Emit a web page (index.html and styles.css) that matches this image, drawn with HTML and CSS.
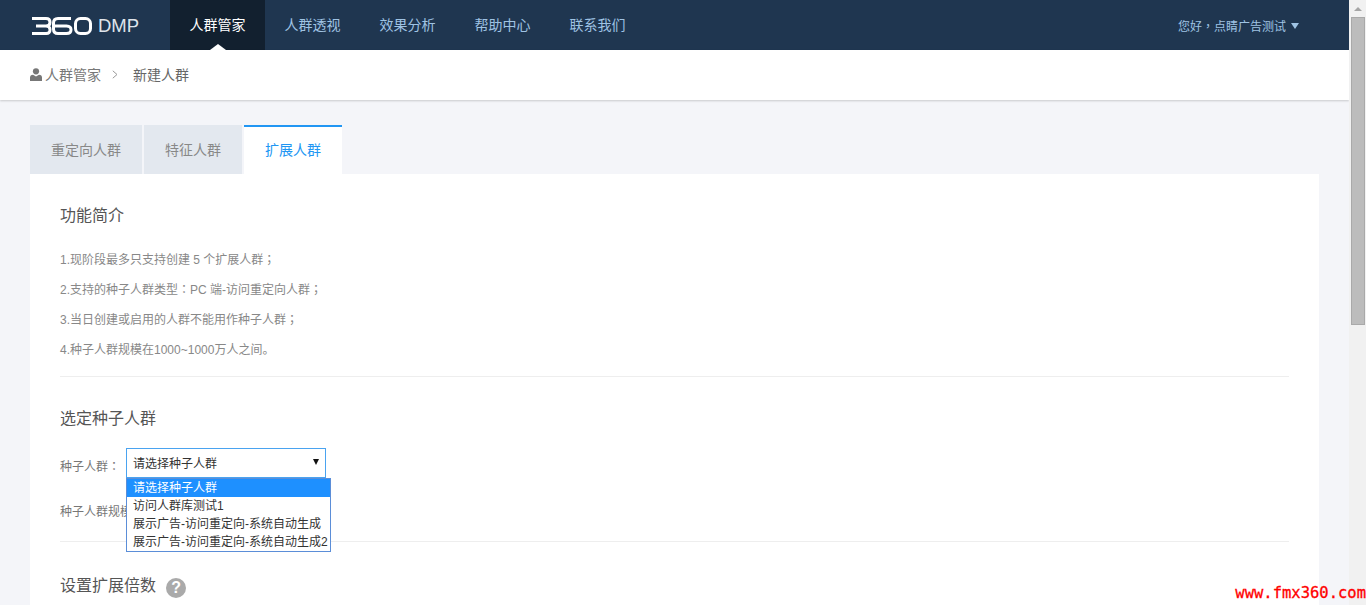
FILE: index.html
```html
<!DOCTYPE html>
<html lang="zh-CN">
<head>
<meta charset="utf-8">
<title>360 DMP</title>
<link rel="stylesheet" href="styles.css">
</head>
<body>
<div class="app">
  <div class="page">
    <header class="topbar">
      <div class="brand">
        <svg class="logo" width="60" height="18" viewBox="0 0 60 18" fill="none" stroke="#fff" stroke-width="3">
          <path d="M0 1.5H14Q18 1.5 18 5.2T14 9H4M14 9Q18 9 18 12.8T14 16.5H0"/>
          <path d="M39 1.5H26Q21.500 1.500 21.500 6V12Q21.500 16.500 26 16.500H34.500Q39 16.500 39 12.800T34.500 9H22"/>
          <rect x="43.500" y="1.500" width="15" height="15" rx="5"/>
        </svg>
        <span class="brand-name">DMP</span>
      </div>
      <nav class="nav">
        <a class="nav-item active">人群管家</a>
        <a class="nav-item">人群透视</a>
        <a class="nav-item">效果分析</a>
        <a class="nav-item">帮助中心</a>
        <a class="nav-item">联系我们</a>
      </nav>
      <div class="user"><span>您好<span class="pt" lang="zh-TW">，</span>点睛广告测试</span><i class="caret"></i></div>
    </header>
    <div class="crumbs">
      <svg class="person" width="12" height="13" viewBox="0 0 12 13"><circle cx="6" cy="3.3" r="3.1" fill="#777"/><path d="M0 13V9.6Q0 7 3 6.8L6 8.4L9 6.8Q12 7 12 9.6V13Z" fill="#777"/></svg>
      <span class="crumb-home">人群管家</span>
      <svg class="chev" width="6" height="9" viewBox="0 0 6 9" fill="none" stroke="#999" stroke-width="1"><path d="M.8.8L5 4.5L.8 8.2"/></svg>
      <span class="crumb-cur">新建人群</span>
    </div>
    <main class="content">
      <div class="tabs">
        <a class="tab t1">重定向人群</a>
        <a class="tab t2">特征人群</a>
        <a class="tab t2 on">扩展人群</a>
      </div>
      <section class="panel">
        <h2 class="h-intro">功能简介</h2>
        <ul class="intro">
          <li>1.现阶段最多只支持创建 5 个扩展人群<span class="pt" lang="zh-TW">；</span></li>
          <li>2.支持的种子人群类型<span class="pt" lang="zh-TW">：</span>PC 端-访问重定向人群<span class="pt" lang="zh-TW">；</span></li>
          <li>3.当日创建或启用的人群不能用作种子人群<span class="pt" lang="zh-TW">；</span></li>
          <li>4.种子人群规模在1000~1000万人之间。</li>
        </ul>
        <hr class="rule">
        <h2 class="h-seed">选定种子人群</h2>
        <div class="field">
          <label class="lab">种子人群<span class="pt" lang="zh-TW">：</span></label>
          <div class="select-wrap">
            <div class="select"><span>请选择种子人群</span><i class="sel-caret"></i></div>
            <ul class="menu">
              <li class="sel">请选择种子人群</li>
              <li>访问人群库测试1</li>
              <li>展示广告-访问重定向-系统自动生成</li>
              <li>展示广告-访问重定向-系统自动生成2</li>
            </ul>
          </div>
        </div>
        <p class="scale">种子人群规模：</p>
        <hr class="rule r2">
        <h2 class="h-mult">设置扩展倍数<span class="help">?</span></h2>
      </section>
    </main>
  </div>
  <aside class="scrollbar">
    <i class="up"></i>
    <div class="thumb"></div>
  </aside>
</div>
<div class="mark">www.fmx360.com</div>
</body>
</html>
```
FILE: styles.css
```css
* { box-sizing: border-box; }
html, body { margin: 0; height: 605px; overflow: hidden; }
body { font-family: "Liberation Sans", "Noto Sans CJK SC", sans-serif; font-size: 12px; color: #777; background: #f4f5f9; }
a { text-decoration: none; }
ul { list-style: none; margin: 0; padding: 0; }
.pt { font-family: "Noto Sans CJK TC", sans-serif; line-height: 1; }

.app { display: flex; height: 605px; }
.page { width: 1349px; height: 605px; overflow: hidden; flex: none; }

.topbar { display: flex; height: 50px; background: #1f3650; padding-left: 32px; }
.brand { display: flex; align-items: center; width: 138px; padding-top: 1px; }
.logo { flex: none; }
.brand-name { margin-left: 6px; font-size: 18.500px; font-family: "Liberation Sans", sans-serif; color: #dfe4ea; }
.nav { display: flex; }
.nav-item { position: relative; width: 95px; line-height: 50px; text-align: center; font-size: 14px; color: #9fc3e3; }
.nav-item.active { background: #12202f; color: #fff; }
.nav-item.active::after { content: ""; position: absolute; left: 40px; bottom: 0; border: 8px solid transparent; border-top: 0; border-bottom: 6px solid #fff; }
.user { margin-left: auto; display: flex; align-items: center; padding-right: 50px; color: #9fc3e3; font-size: 12px; }
.caret { margin-left: 5px; margin-top: 2px; border: 4px solid transparent; border-bottom: 0; border-top: 6px solid #9fc3e3; }

.crumbs { position: relative; display: flex; align-items: center; height: 50px; padding: 0 0 2px 30px; background: #fff; box-shadow: 0 1px 2px rgba(0, 0, 0, .18); font-size: 14px; }
.person { margin-right: 3px; }
.crumb-home { color: #777; }
.chev { margin: 0 15px 0 11px; }
.crumb-cur { color: #666; }

.content { padding: 25px 30px 0; }
.tabs { display: flex; gap: 2px; height: 49px; }
.tab { height: 49px; line-height: 51px; text-align: center; font-size: 14px; color: #888; background: #e3e8ef; }
.t1 { width: 112px; }
.t2 { width: 98px; }
.tab.on { background: #fff; color: #2196f3; border-top: 2px solid #2196f3; line-height: 47px; }

.panel { background: #fff; padding: 0 30px; height: 500px; }
h2 { margin: 0; font-weight: 400; font-size: 16px; color: #555; line-height: 24px; }
.h-intro { padding-top: 30px; height: 54px; }
.intro { padding-top: 17px; }
.intro li { height: 30px; line-height: 30px; color: #888; }
.rule { margin: 11px 0 0; border: 0; border-top: 1px solid #eee; }
.h-seed { margin-top: 30px; }
.field { display: flex; margin-top: 17px; height: 30px; }
.lab { width: 66px; line-height: 38px; color: #777; }
.select-wrap { position: relative; }
.select { display: flex; align-items: center; justify-content: space-between; width: 200px; height: 30px; padding: 0 6px 2px 6px; border: 1px solid #4aa3f0; background: #fff; color: #333; }
.sel-caret { border: 3px solid transparent; border-bottom: 0; border-top: 6px solid #111; }
.menu { position: absolute; left: 0; top: 30px; width: 205px; border: 1px solid #5b8ed8; background: #fff; color: #333; white-space: nowrap; }
.menu li { height: 18px; line-height: 18px; padding-left: 6px; }
.menu .sel { background: #1e90ff; color: #fff; }
.scale { margin: 0; padding-top: 24px; height: 48px; line-height: 20px; color: #777; }
.r2 { margin-top: 15px; }
.h-mult { display: flex; align-items: center; margin-top: 32px; }
.help { display: block; width: 20px; height: 20px; margin: 4px 0 0 10px; border-radius: 50%; background: #aaa; color: #fff; font-size: 16px; font-weight: 700; line-height: 20px; text-align: center; }

.scrollbar { position: relative; width: 17px; height: 605px; background: #f1f1f1; flex: none; }
.up { position: absolute; left: 5px; top: 7px; border: 4px solid transparent; border-top: 0; border-bottom: 4px solid #a5a5a5; }
.thumb { position: absolute; left: 2px; top: 17px; width: 14px; height: 308px; background: #bcbcbc; border: 1px solid #a9a9a9; }

.mark { position: absolute; right: 0; bottom: 2px; font-family: "DejaVu Sans Mono", monospace; font-weight: 400; font-size: 15.500px; line-height: 20px; color: #f00; -webkit-text-stroke: .3px #f00; white-space: nowrap; }
```
